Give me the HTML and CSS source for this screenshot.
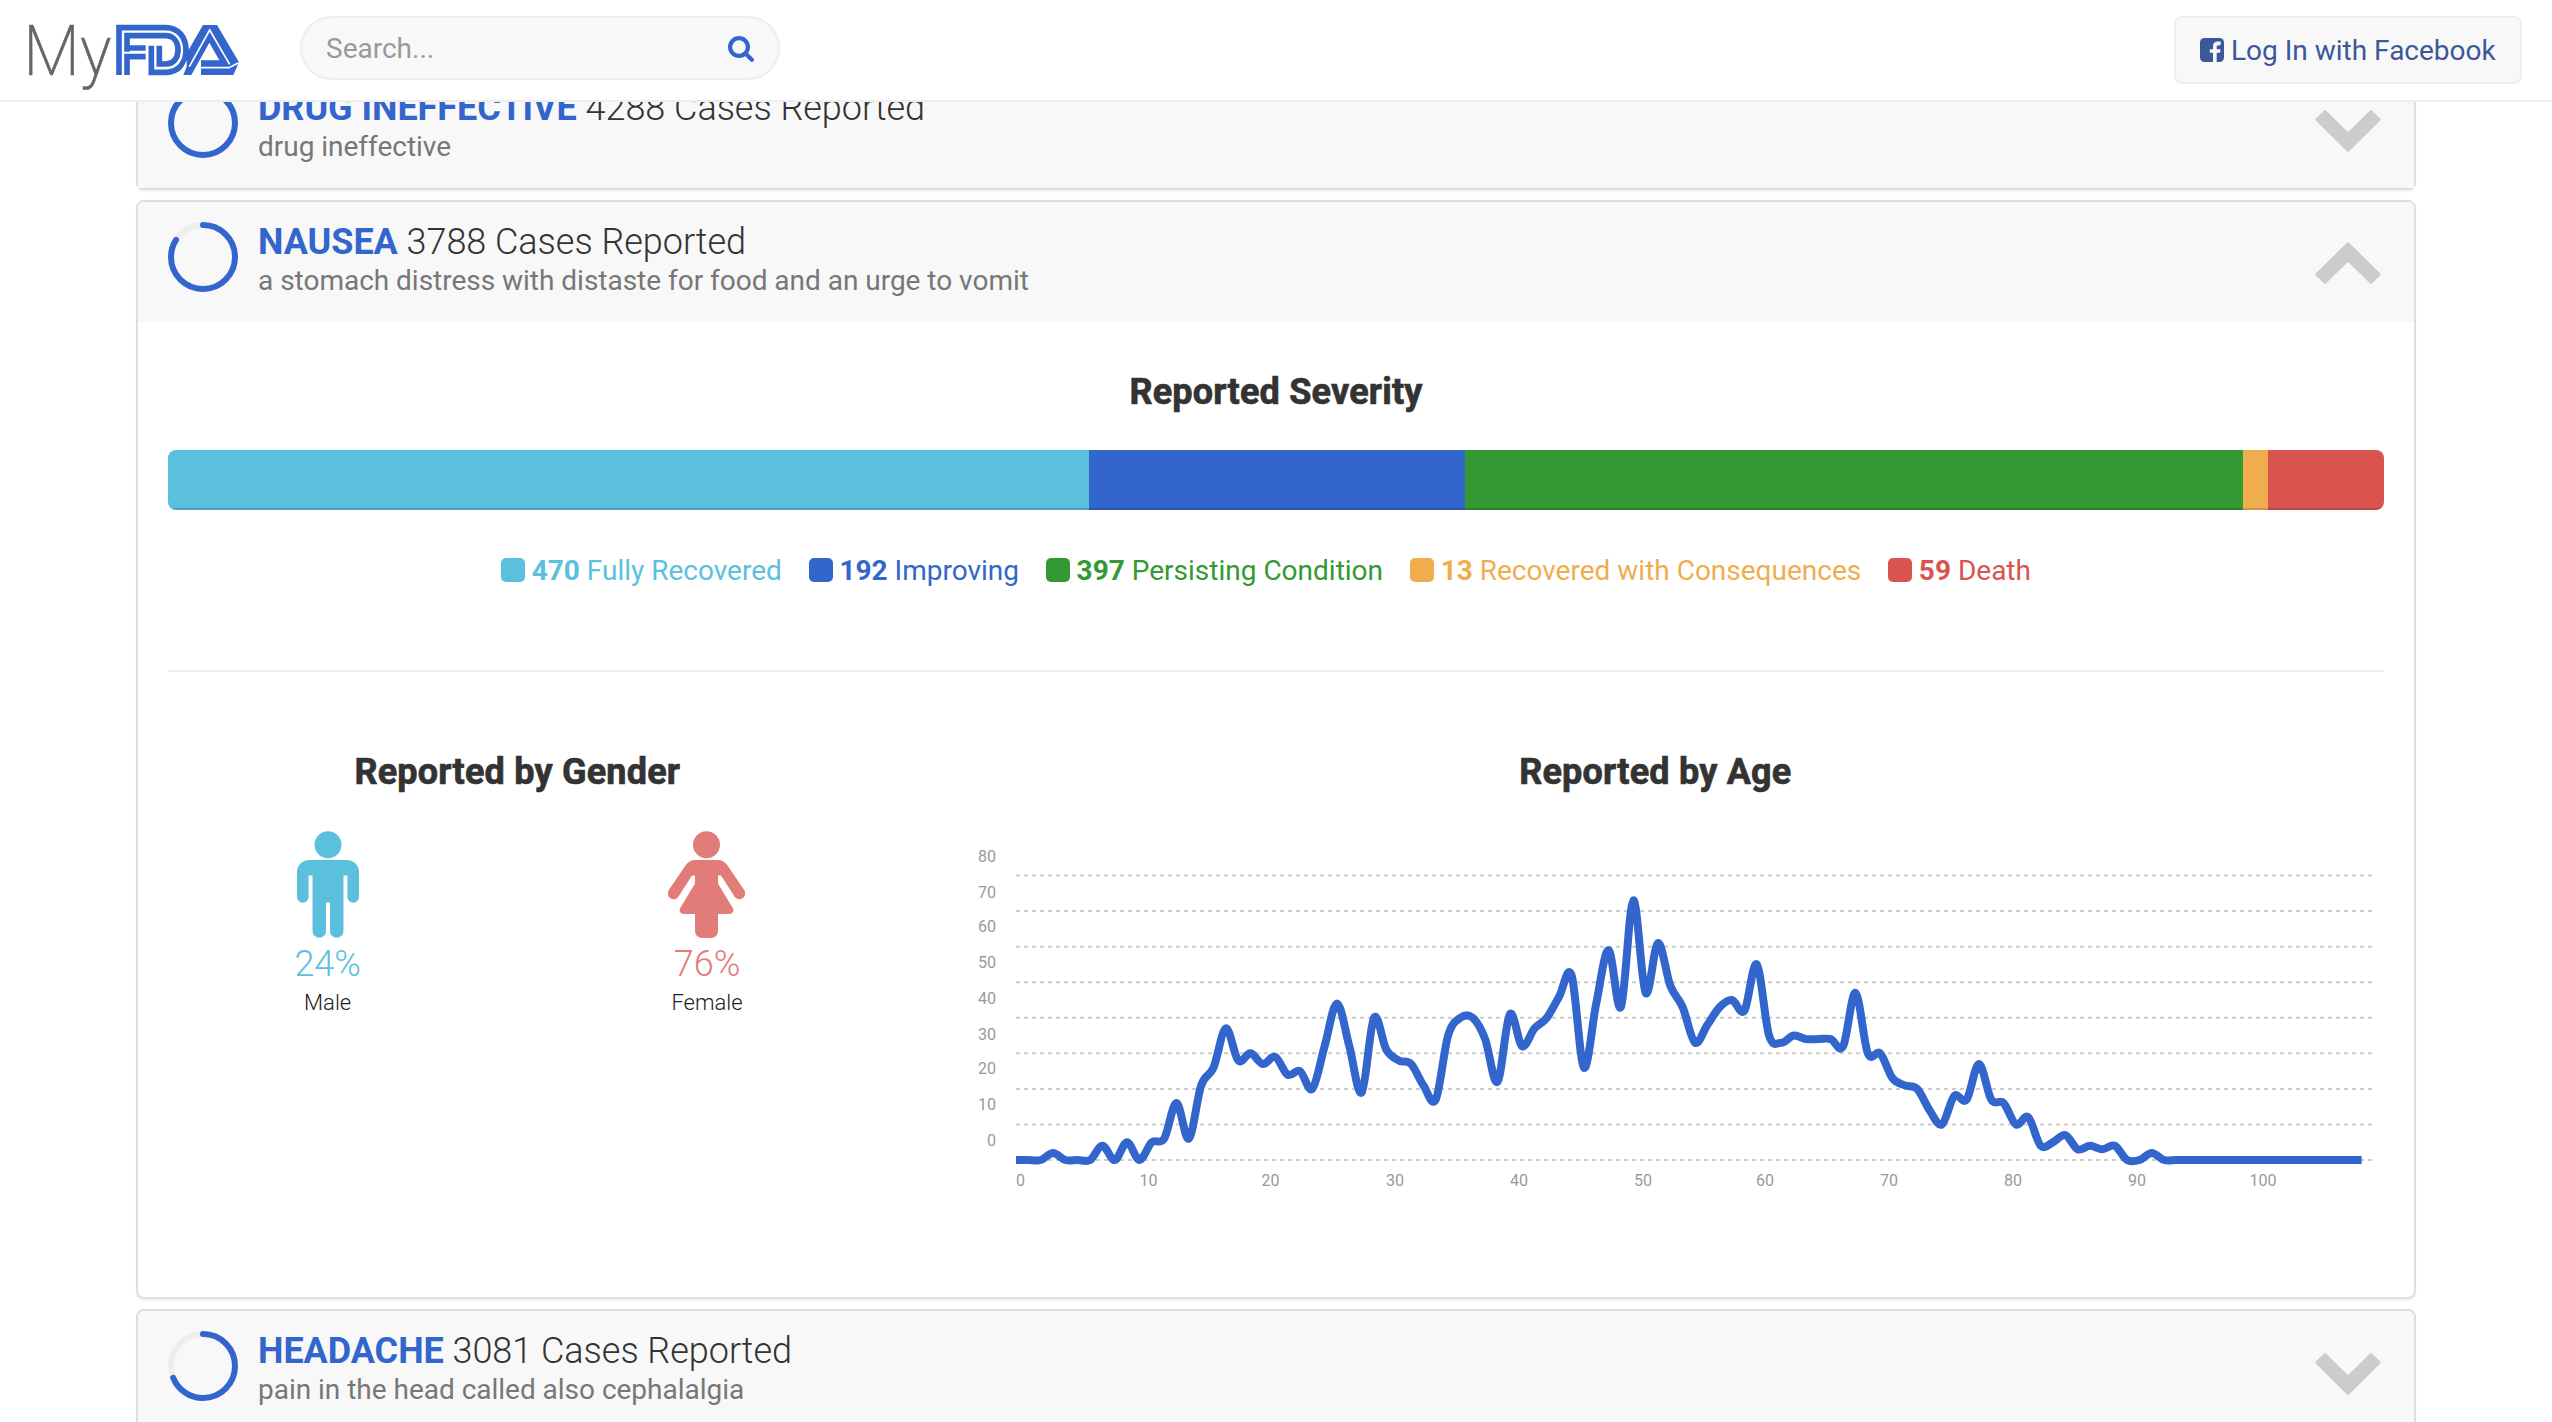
FILE: index.html
```html
<!DOCTYPE html>
<html lang="en">
<head>
<meta charset="utf-8">
<title>MyFDA</title>
<link rel="stylesheet" href="styles.css">
</head>
<body>
<header class="navbar">
  <a class="brand" href="#">
    <svg class="brand-logo" viewBox="0 0 690 270" role="img" aria-label="MyFDA">
      <text class="brand-my" x="10" y="195" textLength="264" lengthAdjust="spacingAndGlyphs">My</text>
      <g class="mark-stroke">
        <path d="M297 195V53H436C478 53 498 84 498 120C498 158 476 187 438 187H394V107"/>
        <path d="M321 125V77H436C462 77 474 97 474 120C474 145 460 162 438 162H418V107"/>
        <path d="M321 114H377M321 195V140H377"/>
      </g>
      <path class="mark-gap" d="M480 195L560 45"/>
      <path class="mark-fill" d="M549 45H591L657 157L640 195H543V151H598L568 98L514 195H490L500 170V130z"/>
      <path class="mark-line" d="M508 170L569 60L629 163M656 158L627 173H541"/>
    </svg>
  </a>
  <div class="search">
    <span class="search-hint">Search...</span>
    <svg class="search-icon" viewBox="0 0 26 26"><circle cx="11" cy="11" r="8.9"/><path d="M17.6 17.6L23.8 23.8"/></svg>
  </div>
  <a class="login" href="#">
    <svg class="login-icon" viewBox="0 0 24 24"><rect width="24" height="24" rx="4.5"/><path d="M13 24V14.8H9.8V11.2H13V8.5C13 5.3 14.9 3.6 17.8 3.6H20.6V7.2H18.6C17.1 7.2 16.7 7.9 16.7 9V11.2H20.5L20 14.8H16.7V24z"/></svg>
    <span>Log In with Facebook</span>
  </a>
</header>

<main class="reactions">
  <section class="panel">
    <div class="panel-head">
      <svg class="ring" viewBox="0 0 70 70"><circle class="ring-track" cx="35" cy="35" r="32"/><circle class="ring-value" cx="35" cy="35" r="32" pathLength="100" stroke-dasharray="100 0"/></svg>
      <div class="panel-text">
        <h2><strong>DRUG INEFFECTIVE</strong> 4288 Cases Reported</h2>
        <p>drug ineffective</p>
      </div>
      <svg class="chevron" viewBox="0 0 66 42"><path d="M10 1.5L33 24L56 1.5L64.5 9.5L33 40.5L1.5 9.5z"/></svg>
    </div>
  </section>

  <section class="panel">
    <div class="panel-head">
      <svg class="ring" viewBox="0 0 70 70"><circle class="ring-track" cx="35" cy="35" r="32"/><circle class="ring-value" cx="35" cy="35" r="32" pathLength="100" stroke-dasharray="84 100"/></svg>
      <div class="panel-text">
        <h2><strong>NAUSEA</strong> 3788 Cases Reported</h2>
        <p>a stomach distress with distaste for food and an urge to vomit</p>
      </div>
      <svg class="chevron chevron-up" viewBox="0 0 66 42"><path d="M10 1.5L33 24L56 1.5L64.5 9.5L33 40.5L1.5 9.5z"/></svg>
    </div>
    <div class="panel-body">
      <h3>Reported Severity</h3>
      <div class="bar">
        <div class="bg-info" style="width:41.56%"></div>
        <div class="bg-primary" style="width:16.97%"></div>
        <div class="bg-success" style="width:35.11%"></div>
        <div class="bg-warning" style="width:1.13%"></div>
        <div class="bg-danger" style="width:5.23%"></div>
      </div>
      <ul class="legend">
        <li class="info"><i class="bg-info"></i><span><b>470</b> Fully Recovered</span></li>
        <li class="primary"><i class="bg-primary"></i><span><b>192</b> Improving</span></li>
        <li class="success"><i class="bg-success"></i><span><b>397</b> Persisting Condition</span></li>
        <li class="warning"><i class="bg-warning"></i><span><b>13</b> Recovered with Consequences</span></li>
        <li class="danger"><i class="bg-danger"></i><span><b>59</b> Death</span></li>
      </ul>
      <hr>
      <div class="breakdown">
        <div class="gender">
          <h3>Reported by Gender</h3>
          <div class="gender-row">
            <div class="person info">
              <svg width="62" height="107" viewBox="0 0 62 107"><circle cx="31" cy="13.7" r="13.5"/><path d="M12 29H50A12 12 0 0 1 62 41V66a5.8 5.8 0 0 1-11.6 0V44.5H46.5V100a6.75 6.75 0 0 1-13.5 0V71.5H29V100a6.75 6.75 0 0 1-13.5 0V44.5H11.6V66a5.8 5.8 0 0 1-11.6 0V41A12 12 0 0 1 12 29z"/></svg>
              <span class="percent">24%</span>
              <span class="who">Male</span>
            </div>
            <div class="person female">
              <svg width="77" height="107" viewBox="0 0 77 107"><circle cx="38.5" cy="13.7" r="13.5"/><path d="M27 29H50C54 29 57 31 59.2 34L76 58.8A5.8 5.8 0 0 1 66.8 66L53 44.5H50V52.5L65 77.5A3.8 3.8 0 0 1 62 83H50V100A7 7 0 0 1 43 107H34A7 7 0 0 1 27 100V83H15A3.8 3.8 0 0 1 12 77.5L27 52.5V44.5H24L10.2 66A5.8 5.8 0 0 1 1 58.8L17.8 34C20 31 23 29 27 29z"/></svg>
              <span class="percent">76%</span>
              <span class="who">Female</span>
            </div>
          </div>
        </div>
        <div class="age">
          <h3>Reported by Age</h3>
          <svg class="chart" id="age-chart" width="1458" height="380" viewBox="926 832 1458 380"></svg>
        </div>
      </div>
    </div>
  </section>

  <section class="panel">
    <div class="panel-head">
      <svg class="ring" viewBox="0 0 70 70"><circle class="ring-track" cx="35" cy="35" r="32"/><circle class="ring-value" cx="35" cy="35" r="32" pathLength="100" stroke-dasharray="69 100"/></svg>
      <div class="panel-text">
        <h2><strong>HEADACHE</strong> 3081 Cases Reported</h2>
        <p>pain in the head called also cephalalgia</p>
      </div>
      <svg class="chevron" viewBox="0 0 66 42"><path d="M10 1.5L33 24L56 1.5L64.5 9.5L33 40.5L1.5 9.5z"/></svg>
    </div>
  </section>
</main>
<script src="chart.js"></script>
</body>
</html>
```
FILE: styles.css
```css
* { box-sizing: border-box; }

body {
  margin: 0;
  height: 1422px;
  overflow: hidden;
  background: #fff;
  color: #333;
  font-family: Roboto, "Liberation Sans", sans-serif;
  font-size: 28px;
}

h2, h3, p, ul { margin: 0; padding: 0; }

/* Top bar */
.navbar {
  position: fixed;
  top: 0;
  left: 0;
  right: 0;
  z-index: 10;
  height: 102px;
  padding: 0 30px 0 20px;
  display: flex;
  align-items: flex-start;
  background: #fff;
  border-bottom: 2px solid #eee;
}
.brand { margin-top: 10px; width: 230px; height: 90px; }
.brand-logo { display: block; width: 230px; height: 90px; }
.brand-my { font-size: 211px; font-weight: 200; fill: #666; stroke: #666; stroke-width: 2; }
.mark-stroke { fill: none; stroke: #36c; stroke-width: 17; }
.mark-gap { fill: none; stroke: #fff; stroke-width: 5; }
.mark-fill { fill: #36c; }
.mark-line { fill: none; stroke: #fff; stroke-width: 5; }

.search {
  margin: 16px 0 0 50px;
  width: 480px;
  height: 64px;
  padding: 0 24px;
  display: flex;
  align-items: center;
  justify-content: space-between;
  background: #f8f8f8;
  border: 2px solid #eee;
  border-radius: 32px;
}
.search-hint { color: #999; }
.search-icon { width: 26px; height: 26px; fill: none; stroke: #36c; stroke-width: 4.2; stroke-linecap: round; margin-top: 2px; }

.login {
  margin: 16px 0 0 auto;
  width: 348px;
  height: 68px;
  padding-left: 24px;
  display: flex;
  align-items: center;
  gap: 7px;
  background: #f8f8f8;
  border: 2px solid #eee;
  border-radius: 8px;
  color: #3b5998;
  text-decoration: none;
}
.login-icon { width: 24px; height: 24px; }
.login-icon rect { fill: #3b5998; }
.login-icon path { fill: #f8f8f8; }

/* Reaction panels */
.reactions {
  width: 2280px;
  margin: 66px auto 0;
  display: flex;
  flex-direction: column;
  gap: 10px;
}
.panel {
  background: #fff;
  border: 2px solid #ddd;
  border-radius: 8px;
  box-shadow: 0 2px 2px rgba(0, 0, 0, .05);
}
.panel-head {
  height: 120px;
  padding: 20px 33px 0 30px;
  display: flex;
  align-items: flex-start;
  background: #f8f8f8;
  border-radius: 6px 6px 0 0;
}
.ring { width: 70px; height: 70px; transform: rotate(-90deg); }
.ring circle { fill: none; stroke-width: 6; }
.ring-track { stroke: #eee; }
.ring-value { stroke: #36c; stroke-linecap: round; }
.panel-text { flex: 1; margin-left: 20px; }
.panel-text h2 { font-size: 36px; line-height: 40px; font-weight: 300; letter-spacing: -.03px; }
.panel-text strong { font-weight: 700; color: #36c; }
.panel-text p { line-height: 38px; color: #777; letter-spacing: -.02px; }
.chevron { width: 66px; height: 42px; margin-top: 22px; fill: #ccc; stroke: #ccc; stroke-width: 2.5; stroke-linejoin: round; }
.chevron-up { transform: scaleY(-1); margin-top: 20px; }

.panel-body { height: 975px; padding: 50px 30px 0; }
h3 {
  font-size: 36px;
  line-height: 40px;
  font-weight: 700;
  letter-spacing: .2px;
  -webkit-text-stroke: .7px #333;
  text-align: center;
}

.bar {
  display: flex;
  height: 60px;
  margin-top: 38px;
  border-radius: 8px;
  overflow: hidden;
}
.bar div { box-shadow: inset 0 -2px 0 rgba(0, 0, 0, .15); }

.bg-info { background: #5bc0de; }
.bg-primary { background: #36c; }
.bg-success { background: #393; }
.bg-warning { background: #f0ad4e; }
.bg-danger { background: #d9534f; }
.info { color: #5bc0de; }
.primary { color: #36c; }
.success { color: #393; }
.warning { color: #f0ad4e; }
.danger { color: #d9534f; }
.female { color: #e27c79; }

.legend {
  display: flex;
  justify-content: center;
  gap: 27px;
  margin-top: 40px;
  padding-right: 20px;
  list-style: none;
  line-height: 40px;
}
.legend li { display: flex; align-items: center; gap: 6.6px; }
.legend span { padding-top: 1px; margin-bottom: -1px; }
.legend i { width: 24px; height: 24px; border-radius: 5px; }

hr { height: 2px; margin: 80px 0; border: 0; background: #eee; }

.breakdown { display: grid; grid-template-columns: 1fr 2fr; margin: 0 -30px; }
.gender-row { display: grid; grid-template-columns: 1fr 1fr; margin-top: 39px; }
.person { display: flex; flex-direction: column; align-items: center; }
.person svg { fill: currentColor; }
.percent { margin-top: 6px; font-size: 36px; line-height: 40px; font-weight: 300; }
.who { margin-top: 4px; font-size: 22px; line-height: 30px; font-weight: 300; color: #222; }

/* Age chart */
.chart { display: block; margin: 40px 0 0 29px; }
.chart text { font-size: 16px; fill: #999; }
.chart .grid { stroke: rgba(0, 0, 0, .2); stroke-width: 2; stroke-dasharray: 4 4; }
.chart .series { fill: none; stroke: #36c; stroke-width: 8; }
```
FILE: chart.js
```js
// Reports per year of age, 0 to 109.
const reports = [
  0, 0, 0, 2, 0, 0, 0, 4, 0, 5,
  0, 5, 6, 16, 6, 21, 26, 37, 28, 30,
  27, 29, 24, 25, 20, 32, 44, 32, 19, 40,
  31, 28, 27, 21, 17, 35, 40, 40, 34, 22,
  41, 32, 37, 40, 46, 52, 26, 44, 59, 43,
  73, 47, 61, 49, 43, 33, 38, 43, 45, 42,
  55, 35, 33, 35, 34, 34, 34, 32, 47, 30,
  30, 23, 21, 20, 14, 10, 18, 17, 27, 17,
  16, 10, 12, 4, 5, 7, 3, 4, 3, 4,
  0, 0, 2, 0
];
while (reports.length < 110) reports.push(0);

const left = 1016, right = 2374, base = 1160;
const stepX = (right - left) / reports.length;
const stepY = 3.556;
const svg = document.getElementById('age-chart');

function add(tag, attrs, text) {
  const el = document.createElementNS('http://www.w3.org/2000/svg', tag);
  for (const key in attrs) el.setAttribute(key, attrs[key]);
  if (text !== undefined) el.textContent = text;
  svg.appendChild(el);
}

for (let v = 0; v <= 80; v += 10) {
  const y = base - v * stepY;
  add('line', { class: 'grid', x1: left, x2: right, y1: y, y2: y });
}

const labelY = [1146, 1110, 1074, 1040, 1004, 968, 932, 898, 862];
labelY.forEach((y, i) => add('text', { x: 996, y: y, 'text-anchor': 'end' }, i * 10));

const labelX = [1016, 1139.5, 1261.5, 1386, 1510, 1634, 1756, 1880, 2004, 2128, 2249.5];
labelX.forEach((x, i) => add('text', { x: x, y: 1186 }, i * 10));

// Catmull-Rom spline through the points, written as cubic curves.
const p = reports.map((v, i) => [left + i * stepX, base - v * stepY]);
let d = 'M' + p[0];
for (let i = 0; i < p.length - 1; i++) {
  const a = p[i - 1] || p[i], b = p[i], c = p[i + 1], e = p[i + 2] || c;
  d += 'C' + [b[0] + (c[0] - a[0]) / 6, b[1] + (c[1] - a[1]) / 6,
    c[0] - (e[0] - b[0]) / 6, c[1] - (e[1] - b[1]) / 6, c[0], c[1]]
    .map(n => n.toFixed(2)).join(' ');
}
add('path', { class: 'series', d: d });
```
